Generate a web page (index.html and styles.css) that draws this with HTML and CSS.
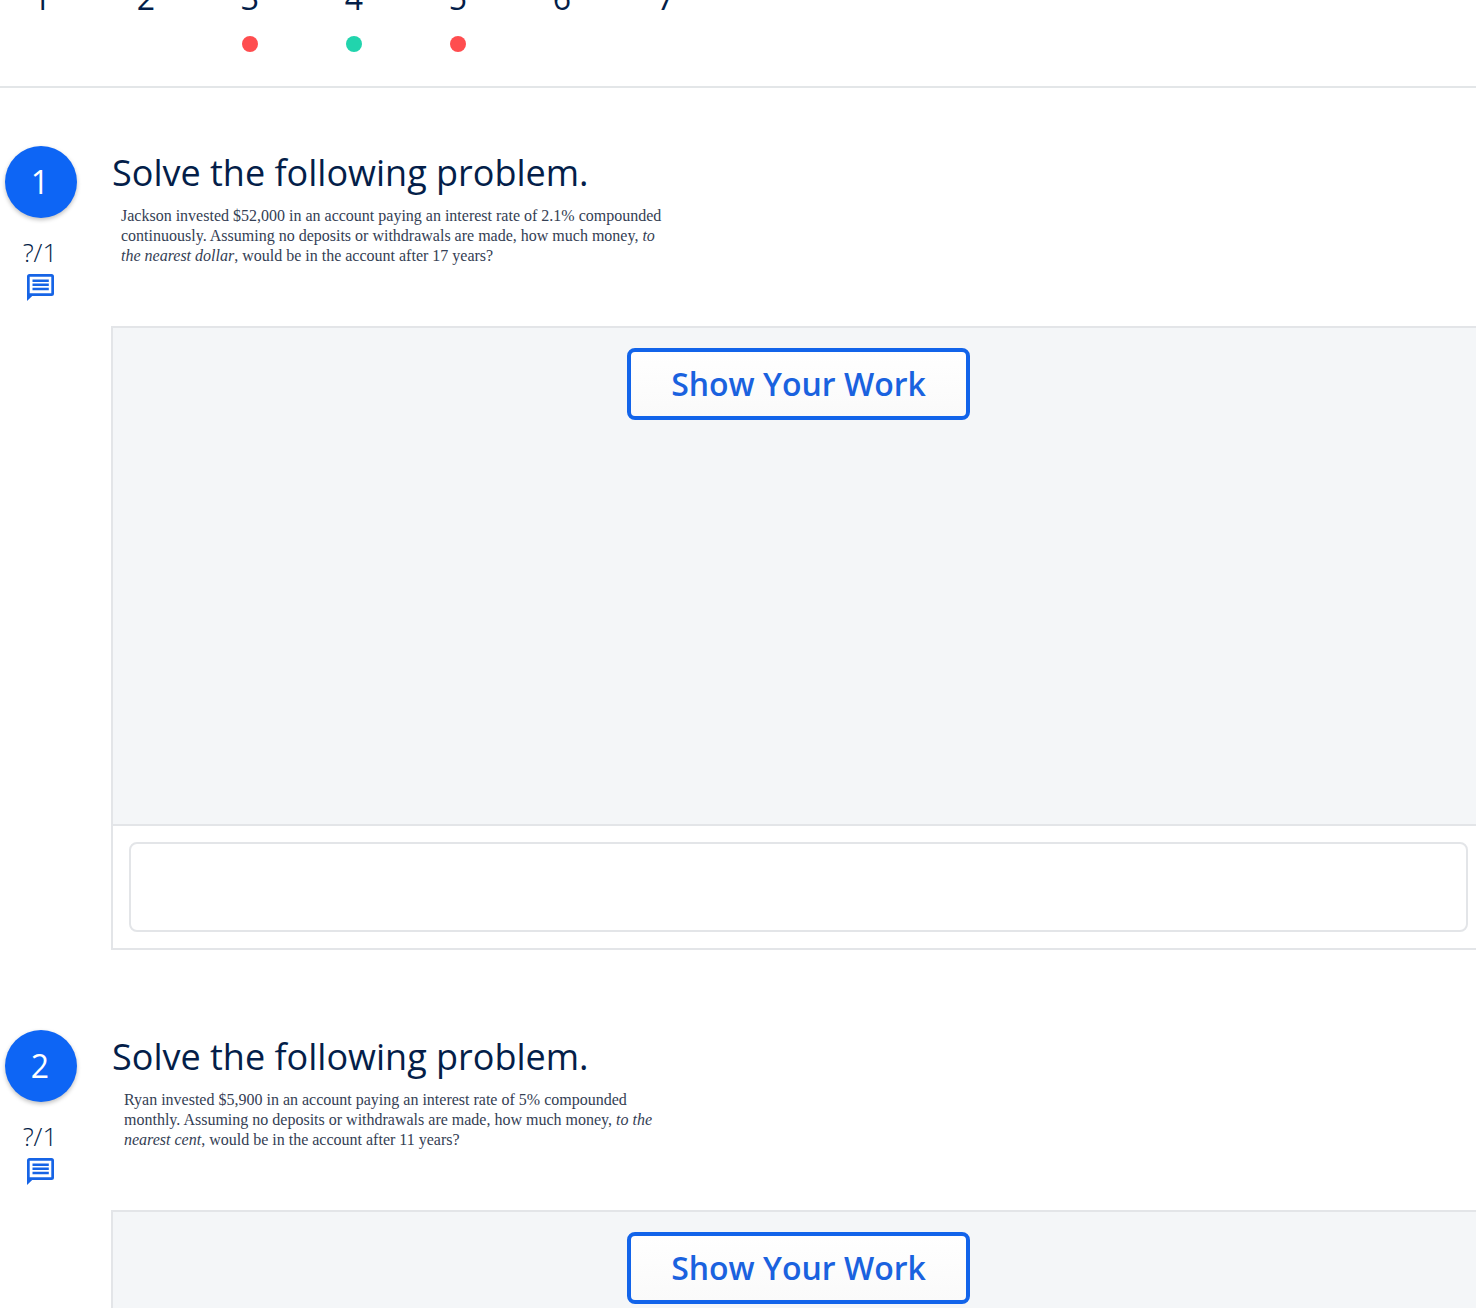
FILE: index.html
```
<!DOCTYPE html>
<html lang="en">
<head>
<meta charset="utf-8">
<meta name="viewport" content="width=device-width, initial-scale=1">
<title>Assignment</title>
<link rel="stylesheet" href="styles.css">
</head>
<body>
<div class="page">
  <nav class="pager" aria-label="Questions">
    <a class="pager-item" href="#q1">1</a>
    <a class="pager-item" href="#q2">2</a>
    <a class="pager-item" href="#q3">3<span class="dot dot-wrong"></span></a>
    <a class="pager-item" href="#q4">4<span class="dot dot-right"></span></a>
    <a class="pager-item" href="#q5">5<span class="dot dot-wrong"></span></a>
    <a class="pager-item" href="#q6">6</a>
    <a class="pager-item" href="#q7">7</a>
  </nav>
  <main class="questions">
    <section class="question" id="q1">
      <div class="question-side">
        <span class="number">1</span>
        <span class="score">?/1</span>
        <button class="comment" type="button" aria-label="Comment on question 1">
          <svg class="comment-icon" viewBox="0 0 27 27" aria-hidden="true">
            <path fill="currentColor" fill-rule="evenodd" d="M2.5 0h22A2.5 2.5 0 0 1 27 2.500v17A2.500 2.500 0 0 1 24.500 22H5.200L0 27V2.500A2.500 2.500 0 0 1 2.500 0zM2.700 2.700v16.600h21.600V2.700zM5.500 5.500h16.300v2.500H5.500zM5.500 9.500h16.300V12H5.500zM5.500 13.700h16.300v2.500H5.500z"/>
          </svg>
        </button>
      </div>
      <div class="question-body">
        <h2 class="title">Solve the following problem.</h2>
        <p class="passage">Jackson invested $52,000 in an account paying an interest rate of 2.1% compounded<br>continuously. Assuming no deposits or withdrawals are made, how much money, <em>to</em><br><em>the nearest dollar</em>, would be in the account after 17 years?</p>
        <div class="panel">
          <div class="work"><button class="show-work" type="button">Show Your Work</button></div>
          <div class="answer"><input class="answer-input" type="text" aria-label="Answer to question 1"></div>
        </div>
      </div>
    </section>
    <section class="question" id="q2">
      <div class="question-side">
        <span class="number">2</span>
        <span class="score">?/1</span>
        <button class="comment" type="button" aria-label="Comment on question 2">
          <svg class="comment-icon" viewBox="0 0 27 27" aria-hidden="true">
            <path fill="currentColor" fill-rule="evenodd" d="M2.5 0h22A2.5 2.5 0 0 1 27 2.500v17A2.500 2.500 0 0 1 24.500 22H5.200L0 27V2.500A2.500 2.500 0 0 1 2.500 0zM2.700 2.700v16.600h21.600V2.700zM5.500 5.500h16.300v2.500H5.500zM5.500 9.500h16.300V12H5.500zM5.500 13.700h16.300v2.500H5.500z"/>
          </svg>
        </button>
      </div>
      <div class="question-body">
        <h2 class="title">Solve the following problem.</h2>
        <p class="passage passage-inset">Ryan invested $5,900 in an account paying an interest rate of 5% compounded<br>monthly. Assuming no deposits or withdrawals are made, how much money, <em>to the</em><br><em>nearest cent</em>, would be in the account after 11 years?</p>
        <div class="panel">
          <div class="work"><button class="show-work" type="button">Show Your Work</button></div>
          <div class="answer"><input class="answer-input" type="text" aria-label="Answer to question 2"></div>
        </div>
      </div>
    </section>
  </main>
</div>
</body>
</html>
```
FILE: styles.css
```
*, *::before, *::after { box-sizing: border-box; }

html { overflow-x: hidden; }

body {
  margin: 0;
  background: #fff;
  color: #041e49;
  font-family: "Open Sans", sans-serif;
}

/* The sheet is slightly wider than the window on both sides. */
.page { margin: -20px -10px 0; }

.pager {
  display: flex;
  height: 108px;
  border-bottom: 2px solid #e3e6e8;
}

.pager-item {
  display: flex;
  flex-direction: column;
  align-items: center;
  width: 104px;
  gap: 20px;
  color: #041e49;
  font-size: 32px;
  line-height: 36px;
  text-decoration: none;
}

.dot {
  width: 16px;
  height: 16px;
  border-radius: 50%;
}
.dot-wrong { background: #ff4d4f; }
.dot-right { background: #21d4ad; }

.questions {
  display: flex;
  flex-direction: column;
  gap: 80px;
  padding-top: 58px;
}

.question { display: flex; }

.question-side {
  display: flex;
  flex-direction: column;
  align-items: center;
  flex: none;
  width: 72px;
  margin: 0 34px 0 15px;
}

.number {
  display: grid;
  place-items: center;
  width: 72px;
  height: 72px;
  padding: 0 2px 0 0;
  border-radius: 50%;
  background: #0d65f5;
  box-shadow: 0 2px 4px rgba(0, 0, 0, 0.25);
  color: #fff;
  font-size: 32px;
  font-weight: 400;
  line-height: 72px;
}

.score {
  margin-top: 18px;
  padding-right: 2px;
  font-size: 26px;
  font-weight: 300;
  line-height: 32px;
}

.comment {
  margin: 6px 0 0;
  padding: 0 2px 0 0;
  border: 0;
  background: none;
  color: #1664e6;
}

.comment-icon {
  display: block;
  width: 27px;
  height: 27px;
}

.question-body { flex: 1; min-width: 0; }

.title {
  margin: 0;
  padding-left: 1px;
  font-size: 36px;
  font-weight: 400;
  line-height: 54px;
}

.passage {
  margin: 6px 0 60px;
  padding-left: 10px;
  color: #344054;
  font-family: Georgia, "Liberation Serif", serif;
  font-family: "Liberation Serif", serif;
  font-size: 16px;
  line-height: 20px;
}
.passage-inset { padding-left: 13px; }

.panel { border: 2px solid #e3e5e8; }

.work {
  display: flex;
  justify-content: center;
  align-items: flex-start;
  min-height: 498px;
  padding: 20px;
  border-bottom: 2px solid #e3e5e8;
  background: #f4f6f8;
}

.show-work {
  height: 72px;
  padding: 0 40px 2px;
  border: 4px solid #1264ea;
  border-radius: 8px;
  background: linear-gradient(#fff, #fafafa);
  color: #1a62df;
  font-family: inherit;
  font-size: 32px;
  font-weight: 600;
}

.answer { padding: 16px; }

.answer-input {
  display: block;
  width: 100%;
  height: 90px;
  padding: 0 24px;
  border: 2px solid #e3e5e8;
  border-radius: 8px;
  background: #fff;
  color: inherit;
  font: inherit;
  font-size: 32px;
}
```
